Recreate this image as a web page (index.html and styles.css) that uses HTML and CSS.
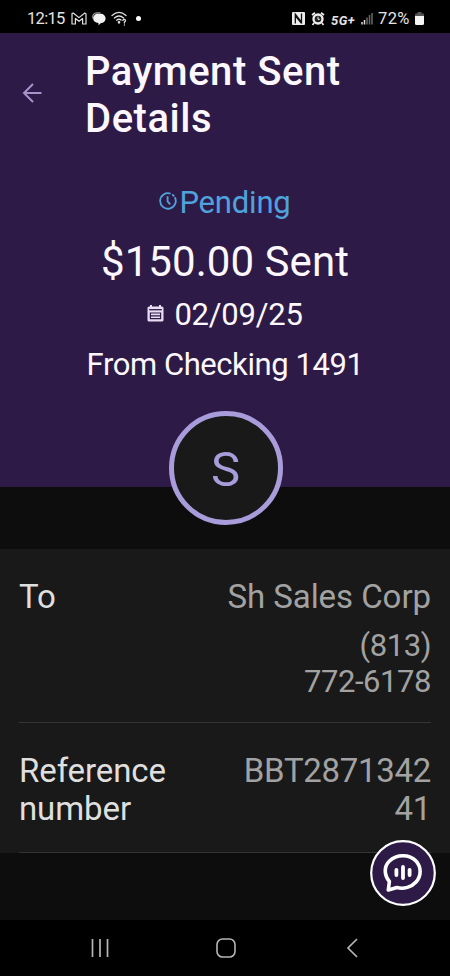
FILE: index.html
```html
<!DOCTYPE html>
<html lang="en">
<head>
<meta charset="utf-8">
<title>Payment Sent Details</title>
<link rel="stylesheet" href="styles.css">
</head>
<body>
<div class="phone">
  <div class="status">
    <div class="status-left">
      <span class="clock">12:15</span>
      <svg class="i-mail" width="16" height="13" viewBox="0 0 16 13" fill="none" stroke="#e4e4e4" stroke-width="1.2" stroke-linejoin="round"><path d="M1 12V2Q1 1 2.2 1L8 5.6 13.8 1Q15 1 15 2V12H11.6V6.5L8 9.3 4.4 6.5V12Z"/></svg>
      <svg class="i-chat" width="14" height="14" viewBox="0 0 14 14"><path d="M1 6.5C0 3 2 .8 5 .8H8.5" fill="none" stroke="#999" stroke-width="1.2"/><path d="M5.5 1.8H9A4.6 4.6 0 0 1 9 11L6.5 13.3V11C3 10.8 1.2 8.9 1.2 6.5S3 1.8 5.5 1.8Z" fill="#f1f1f1"/></svg>
      <svg class="i-wifi" width="18" height="15" viewBox="0 0 18 15" fill="none" stroke="#dedede" stroke-width="1.3" stroke-linecap="round"><path d="M1 4.5Q8 -1.8 15 4.5M3.4 7Q8 3 12.6 7M5.6 9.2Q8 7.3 10 9.1"/><circle cx="8" cy="11.3" r=".7" fill="#dedede"/><path d="M11.8 9.4Q12.4 8 13.8 8.5 15.4 9.5 13.4 11V12M13.4 13.9V14"/></svg>
      <span class="dot"></span>
    </div>
    <div class="status-right">
      <svg class="i-nfc" width="13" height="13" viewBox="0 0 13 13"><rect width="13" height="13" rx="1" fill="#eee"/><path d="M3.3 11.5V2.2L9.5 10.2V1.5M3.3 3.8L9.5 11.4" fill="none" stroke="#111" stroke-width="1.3"/></svg>
      <svg class="i-alarm" width="14" height="14" viewBox="0 0 14 14"><path d="M1 3L4 .8M13 3L10 .8M3 11L1.5 13M11 11L12.5 13" stroke="#eee" stroke-width="1.7"/><circle cx="7" cy="7" r="5.7" fill="#eee"/><circle cx="7" cy="7" r="3.3" fill="#222"/><path d="M7 4.7V7.4L8.8 7.4" fill="none" stroke="#eee"/></svg>
      <span class="net">5G+</span>
      <svg class="i-signal" width="12" height="13" viewBox="0 0 12 13"><path d="M1 10V12.5M3.5 8V12.5" stroke="#ddd" stroke-width="1.5"/><path d="M6 5.5V12.5M8.5 3V12.5M11 1V12.5" stroke="#686868" stroke-width="1.5"/></svg>
      <span class="level">72%</span>
      <svg class="i-battery" width="9" height="13" viewBox="0 0 9 13"><path d="M0 4V2.5Q0 1.5 1 1.5H2.5V0H6.5V1.5H8Q9 1.5 9 2.5V4Z" fill="#555"/><path d="M0 4H9V11.5Q9 13 7.5 13H1.5Q0 13 0 11.5Z" fill="#f5f5f5"/></svg>
    </div>
  </div>

  <header class="hero">
    <div class="title-row">
      <svg class="back" width="20" height="20" viewBox="0 0 20 20" fill="none" stroke="#a793ca" stroke-width="2"><path d="M19.5 10H2M11 1L2 10L11 19"/></svg>
      <h1>Payment Sent<br>Details</h1>
    </div>
    <div class="pending">
      <svg width="18" height="18" viewBox="0 0 18 18" fill="none" stroke="#4fa3dc" stroke-width="1.8"><path d="M15.8 5.2A7.8 7.8 0 1 1 11.6 1.6M13.2 2.4L15.2 4.4" /><path d="M8.6 4.3V9.4L11.2 12.3"/></svg><span>Pending</span>
    </div>
    <div class="amount">$150.00 Sent</div>
    <div class="date">
      <svg width="17" height="17" viewBox="0 0 17 17"><path d="M2 1.5H3V0H5V1.5H12V0H14V1.5H15Q16.5 1.5 16.5 3V15Q16.5 16.5 15 16.5H2Q.5 16.5 .5 15V3Q.5 1.5 2 1.5Z" fill="#e9dcf3"/><path d="M2.2 4.7H14.8" stroke="#2d1b46" stroke-width="1.3"/><path d="M3.4 8H13.6V13.6H3.4ZM3.4 10.8H13.6" fill="none" stroke="#2d1b46" stroke-width="1.2"/></svg><span>02/09/25</span>
    </div>
    <div class="source">From Checking 1491</div>
    <div class="avatar"><span>S</span></div>
  </header>

  <main class="details">
    <section class="row">
      <div class="label">To</div>
      <div class="value"><div class="name">Sh Sales Corp</div><div class="tel">(813)<br>772-6178</div></div>
    </section>
    <section class="row ref">
      <div class="label">Reference<br>number</div>
      <div class="value"><div class="refno">BBT2871342<br>41</div></div>
    </section>
  </main>

  <div class="assistant">
    <svg width="66" height="66" viewBox="0 0 66 66"><circle cx="33" cy="33" r="31.8" fill="#2e1a47" stroke="#fff" stroke-width="2.2"/><path d="M18.3 50L19.4 41.5C14 35 13.7 26.5 19.5 21C26.5 14 39.5 14 46 21C51.5 27 51.5 36 46 42C41.5 47 34 49.5 27 47.6Z" fill="none" stroke="#fff" stroke-width="3.6" stroke-linejoin="round"/><path d="M26.4 29.8V35M33 27V38M39.6 29.8V35" stroke="#fff" stroke-width="3.8" stroke-linecap="round"/></svg>
  </div>

  <nav class="nav">
    <svg width="20" height="20" viewBox="0 0 20 20" stroke="#b5b5b5" stroke-width="1.7"><path d="M2.5 1V19M10 1V19M17.5 1V19"/></svg>
    <svg class="home" width="20" height="20" viewBox="0 0 20 20" fill="none" stroke="#b5b5b5" stroke-width="1.6"><rect x="1" y="1" width="18" height="18" rx="5.5"/></svg>
    <svg width="20" height="20" viewBox="0 0 20 20" fill="none" stroke="#b5b5b5" stroke-width="1.7"><path d="M15 1L6 10L15 19"/></svg>
  </nav>
</div>
</body>
</html>
```
FILE: styles.css
```css
* { box-sizing: border-box; }
body { margin: 0; background: #000; font-family: Roboto, "Liberation Sans", sans-serif; color: #fbf7fc; }
svg { display: block; flex: none; }
.phone { position: relative; width: 450px; height: 976px; display: flex; flex-direction: column; background: #0d0d0d; overflow: hidden; }

.status { height: 33px; flex: none; background: #000; display: flex; justify-content: space-between; padding: 4px 26px 0 27px; color: #e4e4e4; font-size: 16.5px; }
.status-left, .status-right { display: flex; align-items: center; height: 29px; }
.clock { width: 39px; white-space: nowrap; letter-spacing: -0.7px; }
.i-mail { margin-left: 5px; }
.i-chat { margin-left: 5px; }
.i-wifi { margin-left: 5px; }
.dot { width: 5px; height: 5px; border-radius: 50%; background: #fff; margin-left: 7px; }
.i-alarm { margin-left: 6px; }
.net { font-size: 13px; font-weight: 700; font-style: italic; margin: 4px 0 0 6px; width: 27px; letter-spacing: 0.5px; white-space: nowrap; }
.i-signal { margin-left: 3px; }
.level { margin-left: 5px; width: 34px; letter-spacing: 0.4px; white-space: nowrap; }
.i-battery { margin-left: 3px; }

.hero { height: 454px; flex: none; background: #2e1a47; display: flex; flex-direction: column; align-items: center; padding-top: 16px; white-space: nowrap; }
.title-row { align-self: stretch; display: flex; align-items: center; height: 93px; padding-left: 22px; }
.back { margin-top: -6px; }
h1 { margin: 0 0 0 43px; font-size: 40px; line-height: 46.5px; font-weight: 500; letter-spacing: 0.53px; }
.pending { display: flex; align-items: center; height: 36px; margin-top: 43px; font-size: 31px; line-height: 36px; color: #4fa3dc; letter-spacing: -0.2px; }
.pending svg { margin: -4px 2px 0 0; }
.amount { margin-top: 16px; font-size: 42px; line-height: 49px; letter-spacing: 0.05px; }
.date { display: flex; align-items: center; height: 36px; margin-top: 11px; font-size: 31px; line-height: 36px; letter-spacing: -0.25px; }
.date svg { margin: -4px 10px 0 0; }
.source { margin-top: 14px; font-size: 31px; line-height: 36px; letter-spacing: -0.43px; }
.avatar { flex: none; position: relative; width: 114px; height: 114px; margin: 27.5px 0 0 1px; border-radius: 50%; border: 5px solid #a99cdb; background: #191919; color: #a99cdb; font-size: 49px; line-height: 57px; display: flex; align-items: center; justify-content: center; padding-top: 4px; }

.details { margin-top: 62px; height: 304px; flex: none; background: #191919; padding: 0 19px; white-space: nowrap; }
.row { height: 174px; padding-top: 29px; border-bottom: 1px solid #343434; display: flex; justify-content: space-between; font-size: 33px; line-height: 38px; }
.row.ref { height: 130px; }
.label { color: #dfdfdf; letter-spacing: -0.1px; }
.value { text-align: right; color: #a2a2a2; }
.name { letter-spacing: -0.05px; }
.tel { margin-top: 12px; font-size: 31px; line-height: 36px; letter-spacing: -0.45px; }
.refno { letter-spacing: -0.3px; }

.assistant { position: absolute; left: 370px; top: 839.5px; }
.nav { margin-top: auto; height: 56px; flex: none; background: #000; display: flex; justify-content: space-between; align-items: center; padding: 0 88px 0 90px; }
.home { margin-left: -1px; }
```
